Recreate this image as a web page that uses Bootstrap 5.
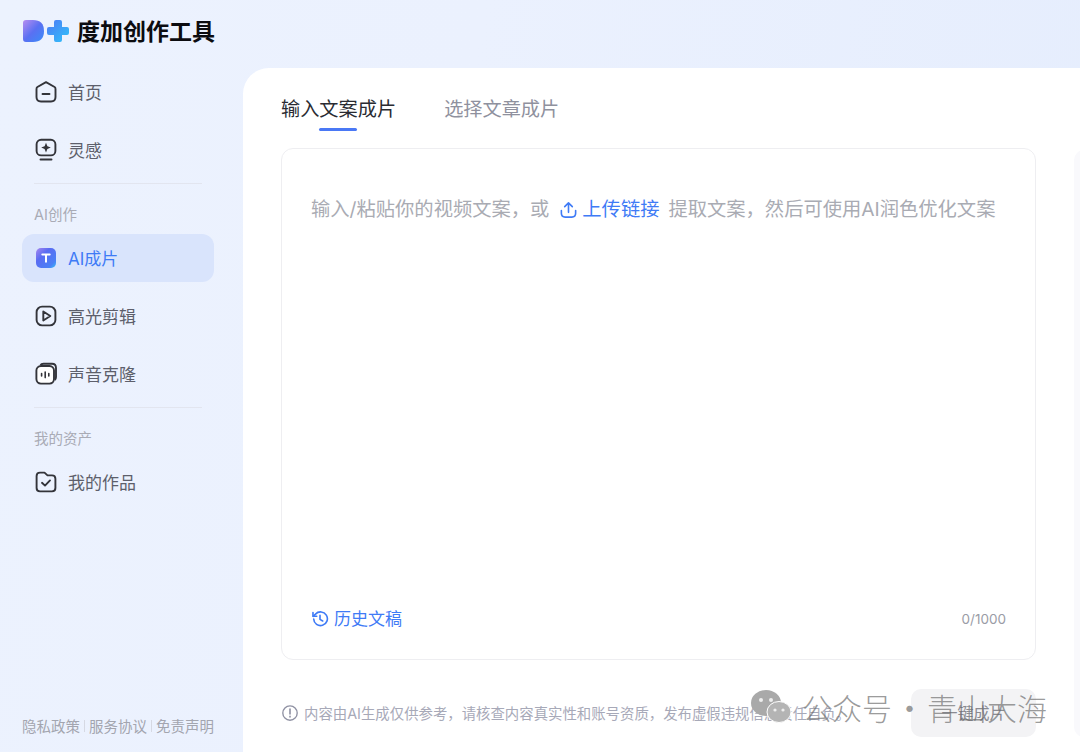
<!DOCTYPE html>
<html lang="zh">
<head>
<meta charset="utf-8">
<title>度加创作工具</title>
<link href="https://cdn.jsdelivr.net/npm/bootstrap@5.3.0/dist/css/bootstrap.min.css" rel="stylesheet">
<style>
html,body{height:752px;overflow:hidden}
body{font-family:Inter,"Noto Sans CJK SC","Liberation Sans",sans-serif;background:linear-gradient(100deg,#ecf2fe 0%,#ebf1fe 40%,#e5edfd 100%);color:#1e1f24}
.app-shell{height:752px}
.top-strip{height:68px;padding:0 0 7px 23px}
.logo-word{font-family:"Noto Sans CJK SC",sans-serif;font-size:23px;font-weight:700;color:#0c0c10;margin-left:6px;line-height:1}
.body-row{height:684px}
.side-col{width:243px;flex:none;padding:0 29px 0 22px}
.side-entry{height:48px;margin-bottom:10px;padding-left:12px;font-size:17px;color:#5d5f6b;border-radius:12px;gap:10px}
.side-entry svg{flex:none}
.side-entry span{padding-top:3px}
.side-entry.is-on{background:#d9e4fc;color:#3f7bf6}
.side-rule{height:1px;background:#e2e5ef;margin:-1px 12px 0}
.side-label{font-size:14.5px;color:#a9abb5;padding:21px 0 9px 12px;line-height:20px;height:50px}
.side-foot{font-size:14.5px;color:#a3a5af;white-space:nowrap;padding-bottom:15px;line-height:20px}
.foot-sep{display:inline-block;width:1px;height:12px;background:#d6d9e3;margin:0 4px}
.main-col{background:#fff;border-top-left-radius:26px;padding:26px 0 0 38px;position:relative;overflow:hidden}
.tab-row{gap:48px;height:54px}
.tab-item{font-size:19.2px;color:#8f919e;line-height:30px;position:relative;white-space:nowrap}
.tab-item.is-on{color:#2a2b32}
.tab-item.is-on::after{content:"";position:absolute;left:38px;top:34px;width:38px;height:3px;border-radius:2px;background:#4a78f5}
.editor-box{width:755px;height:512px;border:1px solid #eeeef1;border-radius:12px;padding:45px 29px 26px}
.hint-line{font-size:19.3px;color:#a9abb3;line-height:30px;white-space:nowrap}
.hint-link{color:#3f7bf6;margin:0 9px 0 10px}
.hist-link{font-size:17px;color:#3f7bf6;line-height:28px;gap:5px}
.count-text{font-size:13.5px;color:#9a9ca6}
.notice-row{width:755px;margin-top:29px;height:48px}
.notice-text{font-size:14.4px;color:#a7a9b8;white-space:nowrap;gap:5px}
.notice-text span{padding-top:2px}
.go-btn{width:125px;height:48px;background:#f3f3f5;border-radius:10px;font-size:16px;color:#8a8b92;flex:none}
.right-strip{position:absolute;left:831px;top:82px;width:40px;height:587px;background:#f9f9fc;border-radius:10px}
.wm-mark{position:absolute;left:750px;top:687px;display:flex;align-items:center;font-family:"Noto Sans CJK SC",sans-serif;font-weight:300;font-size:30px;color:rgba(105,105,105,.68);line-height:40px;white-space:nowrap;z-index:5}
.wm-first{margin-left:10px}
.wm-dot{width:35px;text-align:center;font-weight:400}
</style>
</head>
<body>
<div class="app-shell d-flex flex-column">
  <div class="top-strip d-flex align-items-center">
    <svg width="48" height="24" viewBox="0 0 48 24">
      <defs>
        <linearGradient id="lg1" x1="0" y1="0" x2="1" y2="1"><stop offset="0" stop-color="#b78ef0"/><stop offset=".5" stop-color="#5a70f2"/><stop offset="1" stop-color="#3a8cf8"/></linearGradient>
        <linearGradient id="lg2" x1="0" y1="0" x2="1" y2="1"><stop offset="0" stop-color="#4f78f5"/><stop offset="1" stop-color="#2fc4fa"/></linearGradient>
        <linearGradient id="lg3" x1="0" y1="0" x2="1" y2="1"><stop offset="0" stop-color="#a987ee"/><stop offset=".35" stop-color="#5a6cf2"/><stop offset=".8" stop-color="#4a80f6"/><stop offset="1" stop-color="#35c0f8"/></linearGradient>
      </defs>
      <path d="M0 4Q0 1 3 1H10Q21 1 21 12T10 23H3Q0 23 0 20Z" fill="url(#lg1)"/>
      <path d="M31 3Q31 1 33 1H37Q39 1 39 3V8H44Q46 8 46 10V14Q46 16 44 16H39V21Q39 23 37 23H33Q31 23 31 21V16H26Q24 16 24 14V10Q24 8 26 8H31Z" fill="url(#lg2)"/>
    </svg>
    <span class="logo-word">度加创作工具</span>
  </div>
  <div class="body-row d-flex">
    <nav class="side-col d-flex flex-column">
      <div class="side-entry d-flex align-items-center">
        <svg width="24" height="24" viewBox="0 0 24 24" fill="none" stroke="#33343a" stroke-width="1.9"><path d="M12 2.2 20.6 7Q21.5 7.5 21.5 9V17Q21.5 21.5 17 21.5H7Q2.5 21.5 2.5 17V9Q2.5 7.5 3.4 7Z" stroke-linejoin="round"/><path d="M8.5 14H15.5" stroke-linecap="round"/></svg>
        <span>首页</span>
      </div>
      <div class="side-entry d-flex align-items-center">
        <svg width="24" height="24" viewBox="0 0 24 24" fill="none" stroke="#33343a" stroke-width="1.9"><rect x="2.6" y="1.8" width="18.8" height="15.6" rx="4.5"/><path d="M6.5 21.5H17.5" stroke-linecap="round"/><path d="M12 4.8 13.4 8.2 16.8 9.6 13.4 11 12 14.4 10.6 11 7.2 9.6 10.6 8.2Z" fill="#33343a" stroke="none"/></svg>
        <span>灵感</span>
      </div>
      <div class="side-rule"></div>
      <div class="side-label">AI创作</div>
      <div class="side-entry is-on d-flex align-items-center">
        <svg width="24" height="24" viewBox="0 0 24 24"><rect x="2" y="2" width="20" height="20" rx="5" fill="url(#lg3)"/><path d="M8.3 8.6H15.7M12 8.6V15.8" stroke="#fff" stroke-width="2" stroke-linecap="round"/></svg>
        <span>AI成片</span>
      </div>
      <div class="side-entry d-flex align-items-center">
        <svg width="24" height="24" viewBox="0 0 24 24" fill="none" stroke="#33343a" stroke-width="1.9"><rect x="2.6" y="2.6" width="18.8" height="18.8" rx="5.5"/><path d="M9.3 7.5 16.3 12 9.3 16.5Z" stroke-linejoin="round"/></svg>
        <span>高光剪辑</span>
      </div>
      <div class="side-entry d-flex align-items-center">
        <svg width="24" height="24" viewBox="0 0 24 24" fill="none" stroke="#33343a" stroke-width="1.9"><rect x="2.4" y="4" width="17.6" height="17.6" rx="4.5" fill="#fff"/><path d="M6.5 3.2Q7.2 1.8 9.5 1.8H18Q22 1.8 22 6V15Q22 17 20.8 18"/><path d="M7.6 11.5V14M11.2 10V15.6M14.8 11.5V14" stroke-linecap="round" stroke-width="1.6"/></svg>
        <span>声音克隆</span>
      </div>
      <div class="side-rule"></div>
      <div class="side-label">我的资产</div>
      <div class="side-entry d-flex align-items-center">
        <svg width="24" height="24" viewBox="0 0 24 24" fill="none" stroke="#33343a" stroke-width="1.9"><path d="M2.6 6Q2.6 2.6 6 2.6H10.5L13.5 5.4H18Q21.4 5.4 21.4 8.8V18Q21.4 21.4 18 21.4H6Q2.6 21.4 2.6 18Z" stroke-linejoin="round"/><path d="M8 12.8 11 15.6 16 10.4" stroke-linecap="round" stroke-linejoin="round"/></svg>
        <span>我的作品</span>
      </div>
      <div class="side-foot mt-auto">隐私政策<span class="foot-sep"></span>服务协议<span class="foot-sep"></span>免责声明</div>
    </nav>
    <main class="main-col flex-grow-1">
      <div class="tab-row d-flex">
        <div class="tab-item is-on">输入文案成片</div>
        <div class="tab-item">选择文章成片</div>
      </div>
      <div class="editor-box d-flex flex-column justify-content-between">
        <div class="hint-line d-flex align-items-center">
          <span>输入/粘贴你的视频文案，或</span>
          <span class="hint-link d-inline-flex align-items-center gap-1">
            <svg width="19" height="19" viewBox="0 0 20 20" fill="none" stroke="#3f7bf6" stroke-width="1.7" stroke-linecap="round" stroke-linejoin="round"><path d="M6 7 10 3 14 7M10 3V13"/><path d="M2.5 11V14Q2.5 18 6.5 18H13.5Q17.5 18 17.5 14V11"/></svg>上传链接</span>
          <span>提取文案，然后可使用AI润色优化文案</span>
        </div>
        <div class="d-flex align-items-center justify-content-between">
          <div class="hist-link d-flex align-items-center">
            <svg width="18" height="18" viewBox="0 0 20 20" fill="none" stroke="#3f7bf6" stroke-width="1.8" stroke-linecap="round" stroke-linejoin="round"><path d="M3 10A7.6 7.6 0 1 0 5 4.6L2.4 7"/><path d="M2.2 2.8V7H6.4"/><path d="M10 6V10.4L13 12.2"/></svg>
            <span>历史文稿</span>
          </div>
          <div class="count-text">0/1000</div>
        </div>
      </div>
      <div class="notice-row d-flex align-items-center justify-content-between">
        <div class="notice-text d-flex align-items-center">
          <svg width="18" height="18" viewBox="0 0 20 20" fill="none" stroke="#8f91a3" stroke-width="1.5"><circle cx="10" cy="10" r="8"/><path d="M10 5.5V11M10 13.6V14.4" stroke-linecap="round" stroke-width="1.8"/></svg>
          <span>内容由AI生成仅供参考，请核查内容真实性和账号资质，发布虚假违规信息责任自负。</span>
        </div>
        <div class="go-btn d-flex align-items-center justify-content-center">一键成片</div>
      </div>
      <div class="right-strip"></div>
    </main>
  </div>
</div>
<div class="wm-mark">
  <svg width="42" height="38" viewBox="0 0 42 38"><ellipse cx="16" cy="15" rx="15" ry="13" fill="#a9a9a9"/><ellipse cx="11" cy="12" rx="2" ry="2" fill="#eee"/><ellipse cx="21" cy="12" rx="2" ry="2" fill="#eee"/><ellipse cx="29" cy="24" rx="12" ry="10.5" fill="#b4b4b4" stroke="#fff" stroke-width="1"/><circle cx="25" cy="22" r="1.6" fill="#eee"/><circle cx="33" cy="22" r="1.6" fill="#eee"/></svg>
  <span class="wm-first">公众号</span><span class="wm-dot">·</span><span>青山大海</span>
</div>
</body>
</html>
